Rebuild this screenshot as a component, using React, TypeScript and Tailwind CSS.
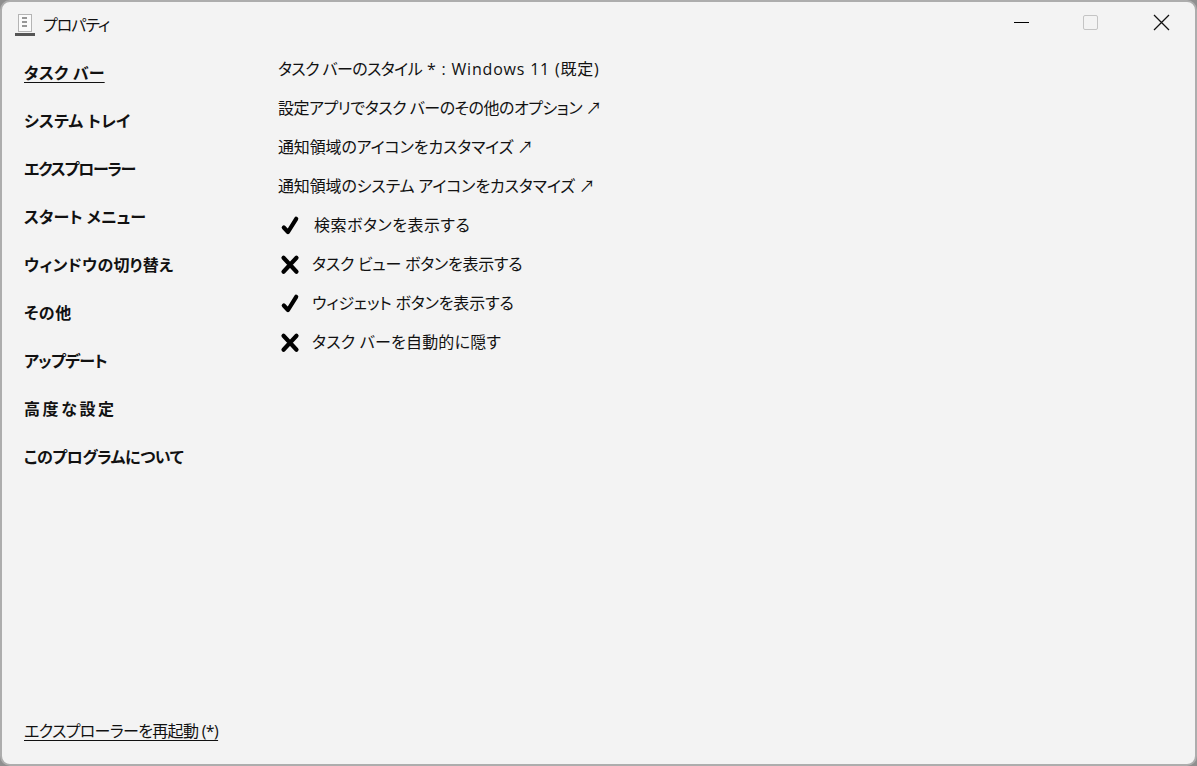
import React from 'react';

const navItems = [
  { label: 'タスク バー', fit: 'tracking-[0.2px]' },
  { label: 'システム トレイ', fit: 'tracking-[0.1px]' },
  { label: 'エクスプローラー', fit: 'tracking-[-1.25px]' },
  { label: 'スタート メニュー', fit: 'tracking-[0px]' },
  { label: 'ウィンドウの切り替え', fit: 'tracking-[0.3px]' },
  { label: 'その他', fit: 'tracking-[0.6px]' },
  { label: 'アップデート', fit: 'tracking-[-0.7px]' },
  { label: '高度な設定', fit: 'tracking-[2.6px]' },
  { label: 'このプログラムについて', fit: 'tracking-[-0.45px]' },
];

const rows: { label: React.ReactNode; mark?: 'check' | 'cross'; fit?: string }[] = [
  {
    label: (
      <>
        <span className="tracking-[-0.6px]">タスク バーのスタイル</span>
        <span className="tracking-[0.8px]"> * : Windows 11 (既定)</span>
      </>
    ),
  },
  { label: '設定アプリでタスク バーのその他のオプション ↗', fit: 'tracking-[-0.47px]' },
  { label: '通知領域のアイコンをカスタマイズ ↗', fit: 'tracking-[-0.15px]' },
  { label: '通知領域のシステム アイコンをカスタマイズ ↗', fit: 'tracking-[-0.15px]' },
  { label: '検索ボタンを表示する', mark: 'check', fit: 'tracking-[0.5px] ml-[2px]' },
  { label: 'タスク ビュー ボタンを表示する', mark: 'cross', fit: 'tracking-[-0.25px]' },
  { label: 'ウィジェット ボタンを表示する', mark: 'check', fit: 'tracking-[-0.15px]' },
  { label: 'タスク バーを自動的に隠す', mark: 'cross', fit: 'tracking-[0.2px]' },
];

const Mark = ({ type }: { type: 'check' | 'cross' }) => (
  <svg width="24" height="24" viewBox="0 0 24 24" className="shrink-0" fill="none" stroke="#000" strokeWidth="4.2" strokeLinecap="round" strokeLinejoin="round">
    {type === 'check' ? <path d="M5.8 13.5 L10 18 L18.2 4.8" /> : <path d="M5.5 4.8 L18.5 18.8 M18.5 4.8 L5.5 18.8" />}
  </svg>
);

const App: React.FC = () => {
  return (
    <div className="w-[1197px] h-[766px] overflow-hidden bg-[#8f8f8f] font-['Open_Sans','Noto_Sans_CJK_JP',sans-serif] [font-feature-settings:'palt'] text-[16px] text-[#111]">
      <div className="w-full h-full flex flex-col rounded-[10px] border-2 border-[#adadad] bg-[#f3f3f3]">
        {/* Title bar */}
        <div className="h-[48px] flex items-center shrink-0 pl-[12px]">
          <svg width="22" height="24" viewBox="0 0 22 24" className="shrink-0 mb-[3px]">
            <rect x="4.5" y="1.5" width="13" height="17" fill="#fbfbfb" stroke="#b4b4b4" />
            <path d="M8 5h5M8 9h5M8 13h5" stroke="#777" strokeWidth="1.5" />
            <rect x="1" y="20" width="20" height="3" fill="#555" />
          </svg>
          <span className="ml-[7px] leading-none mb-[2px] tracking-[-1px]">プロパティ</span>
          <div className="ml-auto flex items-center mb-[7px] -mr-[1px]">
            <div className="w-[70px] flex justify-center">
              <div className="w-[15px] h-px bg-black" />
            </div>
            <div className="w-[70px] flex justify-center">
              <div className="w-[15px] h-[15px] mr-[2px] rounded-[2px] border border-[#c4c4c4]" />
            </div>
            <div className="w-[70px] flex justify-center">
              <svg width="17" height="17" viewBox="0 0 17 17" stroke="#111" strokeWidth="1.3">
                <path d="M1 1 L16 16 M16 1 L1 16" />
              </svg>
            </div>
          </div>
        </div>

        <div className="flex flex-1 min-h-0">
          {/* Sidebar */}
          <div className="w-[276px] shrink-0 pl-[22px] flex flex-col">
            <nav className="flex flex-col gap-[24px] pt-[11px]">
              {navItems.map((item, i) => (
                <div key={item.label} className={`h-[24px] leading-[24px] font-bold ${item.fit}`}>
                  <span className={i === 0 ? 'underline underline-offset-[3px]' : ''}>{item.label}</span>
                </div>
              ))}
            </nav>
            <div className="mt-auto mb-[21px] h-[24px] leading-[24px] tracking-[-0.65px]">
              <span className="underline underline-offset-[3px]">エクスプローラーを再起動 (*)</span>
            </div>
          </div>

          {/* Content */}
          <div className="flex-1 flex flex-col gap-[15px] pt-[7px]">
            {rows.map((row, i) => (
              <div key={i} className="h-[24px] flex items-center leading-[24px] whitespace-pre">
                {row.mark && (
                  <span className="mr-[10px] mt-[1px]">
                    <Mark type={row.mark} />
                  </span>
                )}
                <span className={row.fit}>{row.label}</span>
              </div>
            ))}
          </div>
        </div>
      </div>
    </div>
  );
};

export default App;
